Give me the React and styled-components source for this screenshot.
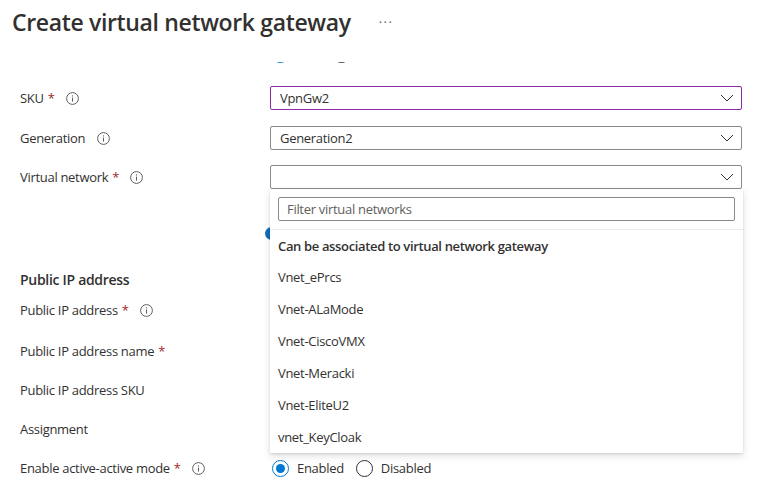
import React from "react";
import styled, { createGlobalStyle } from "styled-components";

const Global = createGlobalStyle`
  html, body { margin: 0; padding: 0; background: #fff; }
  body { font-family: "Open Sans", "Noto Sans", sans-serif; color: #323130; }
  * { box-sizing: border-box; }
`;

const Page = styled.div`
  width: 773px;
  height: 491px;
  overflow: hidden;
  display: flex;
  flex-direction: column;
  background: #fff;
`;

const Header = styled.header`
  height: 62px;
  flex: none;
  display: flex;
  align-items: flex-start;
  padding: 6px 0 0 12px;
  gap: 28px;
  background: #fff;
`;

const Title = styled.h1`
  margin: 0;
  font-size: 23px;
  font-weight: 600;
  letter-spacing: -0.35px;
  color: #323130;
  line-height: 32px;
`;

const More = styled.span`
  font-size: 13px;
  color: #605e5c;
  line-height: 32px;
  letter-spacing: 1.5px;
`;

const Viewport = styled.div`
  flex: 1;
  overflow: hidden;
`;

const Form = styled.div`
  margin-top: -20px;
  padding-left: 20px;
  display: flex;
  flex-direction: column;
`;

const Row = styled.div`
  display: grid;
  grid-template-columns: 250px 472px;
  align-items: center;
  height: 24px;
  margin-top: ${(p) => p.$mt || 0}px;
`;

const Label = styled.div`
  display: flex;
  align-items: center;
  font-size: 13px;
  letter-spacing: -0.3px;
  color: #323130;
  white-space: nowrap;
`;

const Heading = styled.div`
  font-size: 14px;
  font-weight: 600;
  letter-spacing: -0.3px;
  color: #323130;
`;

const Star = styled.span`
  color: #a4262c;
  margin-left: 4px;
`;

const InfoWrap = styled.span`
  display: inline-flex;
  margin-left: ${(p) => (p.$star ? 11 : 12)}px;
`;

const Field = styled.div`
  position: relative;
  height: 24px;
`;

const Select = styled.div`
  height: 24px;
  border: 1px solid ${(p) => (p.$focus ? "#8a2fa8" : "#8a8886")};
  border-radius: 2px;
  display: flex;
  align-items: center;
  justify-content: space-between;
  padding: 0 7px 0 9px;
  font-size: 13px;
  letter-spacing: -0.3px;
  color: #323130;
  background: #fff;
`;

const Dropdown = styled.div`
  position: absolute;
  top: 24px;
  left: 0;
  width: 473px;
  background: #fff;
  box-shadow: 0 3.2px 7.2px rgba(0, 0, 0, 0.13), 0 0.6px 1.8px rgba(0, 0, 0, 0.11);
  z-index: 10;
`;

const FilterArea = styled.div`
  padding: 8px;
  border-bottom: 1px solid #edebe9;
`;

const FilterInput = styled.div`
  height: 24px;
  border: 1px solid #8a8886;
  border-radius: 2px;
  display: flex;
  align-items: center;
  padding-left: 8px;
  font-size: 13px;
  letter-spacing: -0.3px;
  color: #605e5c;
`;

const GroupHeader = styled.div`
  height: 31px;
  display: flex;
  align-items: center;
  padding-left: 8px;
  font-size: 13px;
  font-weight: 600;
  letter-spacing: -0.35px;
  color: #323130;
`;

const Option = styled.div`
  height: 32px;
  display: flex;
  align-items: center;
  padding-left: 8px;
  font-size: 13px;
  letter-spacing: -0.3px;
  color: #323130;
`;

const RadioGroup = styled.div`
  display: flex;
  align-items: center;
  gap: 12px;
  padding-left: 2px;
`;

const RadioItem = styled.label`
  display: flex;
  align-items: center;
  gap: 8px;
  font-size: 13px;
  letter-spacing: -0.3px;
  color: #323130;
`;

const RadioCircle = styled.span`
  width: 17px;
  height: 17px;
  border-radius: 50%;
  border: 1px solid ${(p) => (p.$on ? "#0078d4" : "#323130")};
  display: inline-flex;
  align-items: center;
  justify-content: center;
  &::after {
    content: "";
    width: 9px;
    height: 9px;
    border-radius: 50%;
    background: ${(p) => (p.$on ? "#0078d4" : "transparent")};
  }
`;

const HiddenDot = styled.span`
  display: block;
  width: 13px;
  height: 13px;
  border-radius: 50%;
  background: #0f6cbd;
  margin-left: -5px;
`;

const Info = () => (
  <svg width="13" height="13" viewBox="0 0 13 13">
    <circle cx="6.5" cy="6.5" r="5.9" fill="none" stroke="#605e5c" strokeWidth="1" />
    <line x1="6.5" y1="5.6" x2="6.5" y2="9.6" stroke="#605e5c" strokeWidth="1" />
    <circle cx="6.5" cy="3.9" r="0.7" fill="#605e5c" />
  </svg>
);

const Chevron = () => (
  <svg width="14" height="8" viewBox="0 0 14 8">
    <path d="M1 1 L7 7 L13 1" fill="none" stroke="#323130" strokeWidth="1" />
  </svg>
);

const LabelText = ({ text, star, info }) => (
  <Label>
    {text}
    {star && <Star>*</Star>}
    {info && (
      <InfoWrap $star={star}>
        <Info />
      </InfoWrap>
    )}
  </Label>
);

const vnets = ["Vnet_ePrcs", "Vnet-ALaMode", "Vnet-CiscoVMX", "Vnet-Meracki", "Vnet-EliteU2", "vnet_KeyCloak"];

export default function App() {
  return (
    <Page>
      <Global />
      <Header>
        <Title>Create virtual network gateway</Title>
        <More>···</More>
      </Header>
      <Viewport>
        <Form>
          <Row>
            <LabelText text="Gateway type" star info />
            <RadioGroup>
              <RadioItem>
                <RadioCircle $on />
                VPN
              </RadioItem>
              <RadioItem>
                <RadioCircle />
                ExpressRoute
              </RadioItem>
            </RadioGroup>
          </Row>
          <Row $mt={20}>
            <LabelText text="SKU" star info />
            <Field>
              <Select $focus>
                VpnGw2
                <Chevron />
              </Select>
            </Field>
          </Row>
          <Row $mt={16}>
            <LabelText text="Generation" info />
            <Field>
              <Select>
                Generation2
                <Chevron />
              </Select>
            </Field>
          </Row>
          <Row $mt={15} style={{ position: "relative", zIndex: 5 }}>
            <LabelText text="Virtual network" star info />
            <Field>
              <Select>
                <span />
                <Chevron />
              </Select>
              <Dropdown>
                <FilterArea>
                  <FilterInput>Filter virtual networks</FilterInput>
                </FilterArea>
                <GroupHeader>Can be associated to virtual network gateway</GroupHeader>
                {vnets.map((v) => (
                  <Option key={v}>{v}</Option>
                ))}
              </Dropdown>
            </Field>
          </Row>
          <Row $mt={32}>
            <span />
            <HiddenDot />
          </Row>
          <Row $mt={22}>
            <Heading>Public IP address</Heading>
          </Row>
          <Row $mt={7}>
            <LabelText text="Public IP address" star info />
          </Row>
          <Row $mt={17}>
            <LabelText text="Public IP address name" star />
          </Row>
          <Row $mt={15}>
            <LabelText text="Public IP address SKU" />
          </Row>
          <Row $mt={15}>
            <LabelText text="Assignment" />
          </Row>
          <Row $mt={15}>
            <LabelText text="Enable active-active mode" star info />
            <RadioGroup>
              <RadioItem>
                <RadioCircle $on />
                Enabled
              </RadioItem>
              <RadioItem>
                <RadioCircle />
                Disabled
              </RadioItem>
            </RadioGroup>
          </Row>
        </Form>
      </Viewport>
    </Page>
  );
}
